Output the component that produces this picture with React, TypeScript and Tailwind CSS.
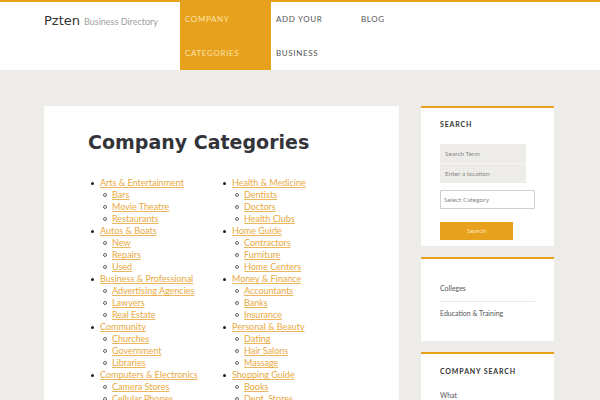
type Cat = { name: string; children: string[] };

const COL_A: Cat[] = [
  { name: 'Arts & Entertainment', children: ['Bars', 'Movie Theatre', 'Restaurants'] },
  { name: 'Autos & Boats', children: ['New', 'Repairs', 'Used'] },
  { name: 'Business & Professional', children: ['Advertising Agencies', 'Lawyers', 'Real Estate'] },
  { name: 'Community', children: ['Churches', 'Government', 'Libraries'] },
  { name: 'Computers & Electronics', children: ['Camera Stores', 'Cellular Phones', 'Computer Repair'] },
];

const COL_B: Cat[] = [
  { name: 'Health & Medicine', children: ['Dentists', 'Doctors', 'Health Clubs'] },
  { name: 'Home Guide', children: ['Contractors', 'Furniture', 'Home Centers'] },
  { name: 'Money & Finance', children: ['Accountants', 'Banks', 'Insurance'] },
  { name: 'Personal & Beauty', children: ['Dating', 'Hair Salons', 'Massage'] },
  { name: 'Shopping Guide', children: ['Books', 'Dept. Stores', 'Gifts'] },
];

function CatLink({ label }: { label: string }) {
  return <a className="text-[#e9a93e] underline underline-offset-[1px] decoration-[#ecb75e]">{label}</a>;
}

function CatColumn({ cats }: { cats: Cat[] }) {
  return (
    <ul>
      {cats.map((c) => (
        <li key={c.name}>
          <div className="flex items-center h-[12px]">
            <span className="w-[3px] h-[3px] rounded-full bg-[#222] ml-[2px] mr-[6px]" />
            <CatLink label={c.name} />
          </div>
          <ul>
            {c.children.map((s) => (
              <li key={s} className="flex items-center h-[12px] pl-[14px]">
                <span className="w-[4px] h-[4px] rounded-full border border-[#666] mr-[5px]" />
                <CatLink label={s} />
              </li>
            ))}
          </ul>
        </li>
      ))}
    </ul>
  );
}

function Widget({ children, className = '' }: { children: React.ReactNode; className?: string }) {
  return (
    <div className={`bg-white border-t-2 border-[#e8a11c] pl-[19px] pr-[19px] ${className}`}>{children}</div>
  );
}

export default function App() {
  return (
    <div className="min-h-screen bg-[#edece8]" style={{ fontFamily: 'Lato, "Open Sans", sans-serif' }}>
      {/* header */}
      <header className="bg-white border-t-2 border-[#e8a11c] h-[70px] flex pl-[44px]">
        <div className="w-[136px] pt-[9px] flex items-baseline gap-[4px] whitespace-nowrap">
          <span className="text-[13px] text-[#333]" style={{ fontFamily: '"DejaVu Sans", sans-serif' }}>Pzten</span>
          <span className="text-[9px] text-[#a0a0a0]">Business Directory</span>
        </div>
        <nav className="flex text-[8px] tracking-[0.08em] uppercase leading-[34px]">
          <div className="w-[91px] px-[5px] bg-[#e8a11c] text-[#fbe3a8]">
            Company<br />Categories
          </div>
          <div className="w-[85px] px-[5px] text-[#555]">
            Add your<br />Business
          </div>
          <div className="px-[5px] text-[#555]">Blog</div>
        </nav>
      </header>

      {/* body */}
      <div className="flex items-start gap-[22px] pl-[44px] pt-[36px]">
        <main className="w-[355px] bg-white pl-[44px] pt-[24px] pb-[30px]">
          <h1
            className="text-[19px] leading-[24px] font-bold text-[#33343a]"
            style={{ fontFamily: '"DejaVu Sans", sans-serif' }}
          >
            Company Categories
          </h1>
          <div className="mt-[23px] grid grid-cols-[133px_133px] text-[9px]">
            <div className="pl-[1px]">
              <CatColumn cats={COL_A} />
            </div>
            <div>
              <CatColumn cats={COL_B} />
            </div>
          </div>
        </main>

        <aside className="w-[133px] flex flex-col gap-[11px]">
          <Widget className="h-[140px] pt-[11px]">
            <h3 className="text-[7px] font-bold tracking-[0.12em] text-[#333] leading-[10px]">SEARCH</h3>
            <div className="mt-[15px] w-[86px] bg-[#eeece8] text-[6.5px] text-[#888]">
              <div className="h-[20px] flex items-center px-[5px] border-b border-[#f6f5f2]">Search Term</div>
              <div className="h-[19px] flex items-center px-[5px]">Enter a location</div>
            </div>
            <div className="mt-[7px] w-[95px] h-[19px] border border-[#cfcfcf] rounded-[1px] flex items-center px-[3px] text-[6.5px] text-[#888]">
              Select Category
            </div>
            <div className="mt-[13px] w-[73px] h-[18px] bg-[#e8a11c] flex items-center justify-center text-[6.5px] text-[#fbe7b8]">
              Search
            </div>
          </Widget>
          <Widget className="h-[84px] pt-[23px]">
            <div className="text-[7px] text-[#555] h-[13px] leading-[13px]">Colleges</div>
            <div className="mt-[6px] w-[95px] border-t border-[#e8e8e8]" />
            <div className="mt-[5px] text-[7px] text-[#555] h-[13px] leading-[13px]">Education &amp; Training</div>
          </Widget>
          <Widget className="h-[60px] pt-[12px]">
            <h3 className="text-[7px] font-bold tracking-[0.12em] text-[#333] leading-[10px]">COMPANY SEARCH</h3>
            <div className="mt-[14px] text-[7px] text-[#555] leading-[10px]">What</div>
          </Widget>
        </aside>
      </div>
    </div>
  );
}
